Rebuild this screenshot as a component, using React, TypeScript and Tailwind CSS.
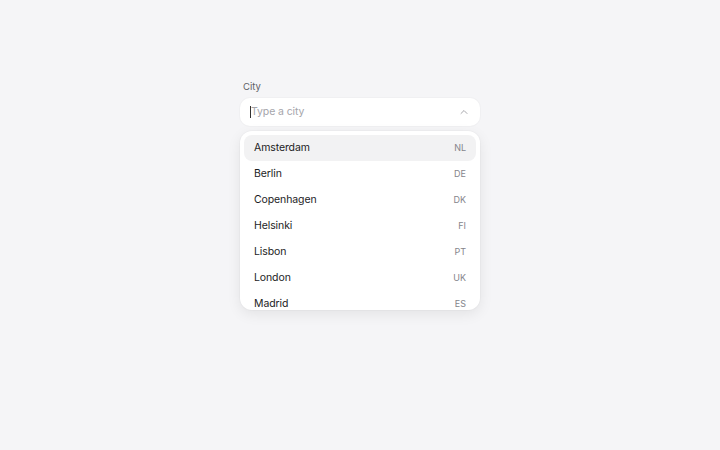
import { ChevronUp } from "lucide-react"

const cities = [
  { name: "Amsterdam", code: "NL" },
  { name: "Berlin", code: "DE" },
  { name: "Copenhagen", code: "DK" },
  { name: "Helsinki", code: "FI" },
  { name: "Lisbon", code: "PT" },
  { name: "London", code: "UK" },
  { name: "Madrid", code: "ES" },
]

export default function App() {
  return (
    <div className="min-h-[450px] w-full bg-[#f5f5f7] font-['Inter',sans-serif] flex justify-center pt-[81px]">
      <div className="w-[240px] flex flex-col">
        <label className="text-[9.5px] text-[#5f5f66] pl-[3px] leading-[12px]">City</label>
        <div className="mt-[5px] h-[28px] rounded-[10px] bg-white shadow-[0_0_0_1px_rgba(0,0,0,0.02)] flex items-center pl-[10px] pr-[10px]">
          <div className="w-px h-[12px] bg-[#333]" />
          <input
            className="flex-1 bg-transparent outline-none text-[10.5px] tracking-[-0.01em] text-[#222] placeholder:text-[#a5a5ab]"
            placeholder="Type a city"
          />
          <ChevronUp className="w-3 h-3 text-[#9a9aa0]" strokeWidth={1.75} />
        </div>
        <div className="mt-[5px] h-[179px] overflow-hidden rounded-[12px] bg-white shadow-[0_4px_14px_rgba(0,0,0,0.08),0_0_0_1px_rgba(0,0,0,0.02)] p-[4px]">
          <ul className="flex flex-col">
            {cities.map((c, i) => (
              <li
                key={c.name}
                className={
                  "h-[26px] shrink-0 flex items-center justify-between px-[10px] rounded-[8px] " +
                  (i === 0 ? "bg-[#f2f2f3]" : "")
                }
              >
                <span className="text-[10.5px] tracking-[-0.01em] text-[#1c1c1e]">{c.name}</span>
                <span className="text-[9px] text-[#85858b]">{c.code}</span>
              </li>
            ))}
          </ul>
        </div>
      </div>
    </div>
  )
}
